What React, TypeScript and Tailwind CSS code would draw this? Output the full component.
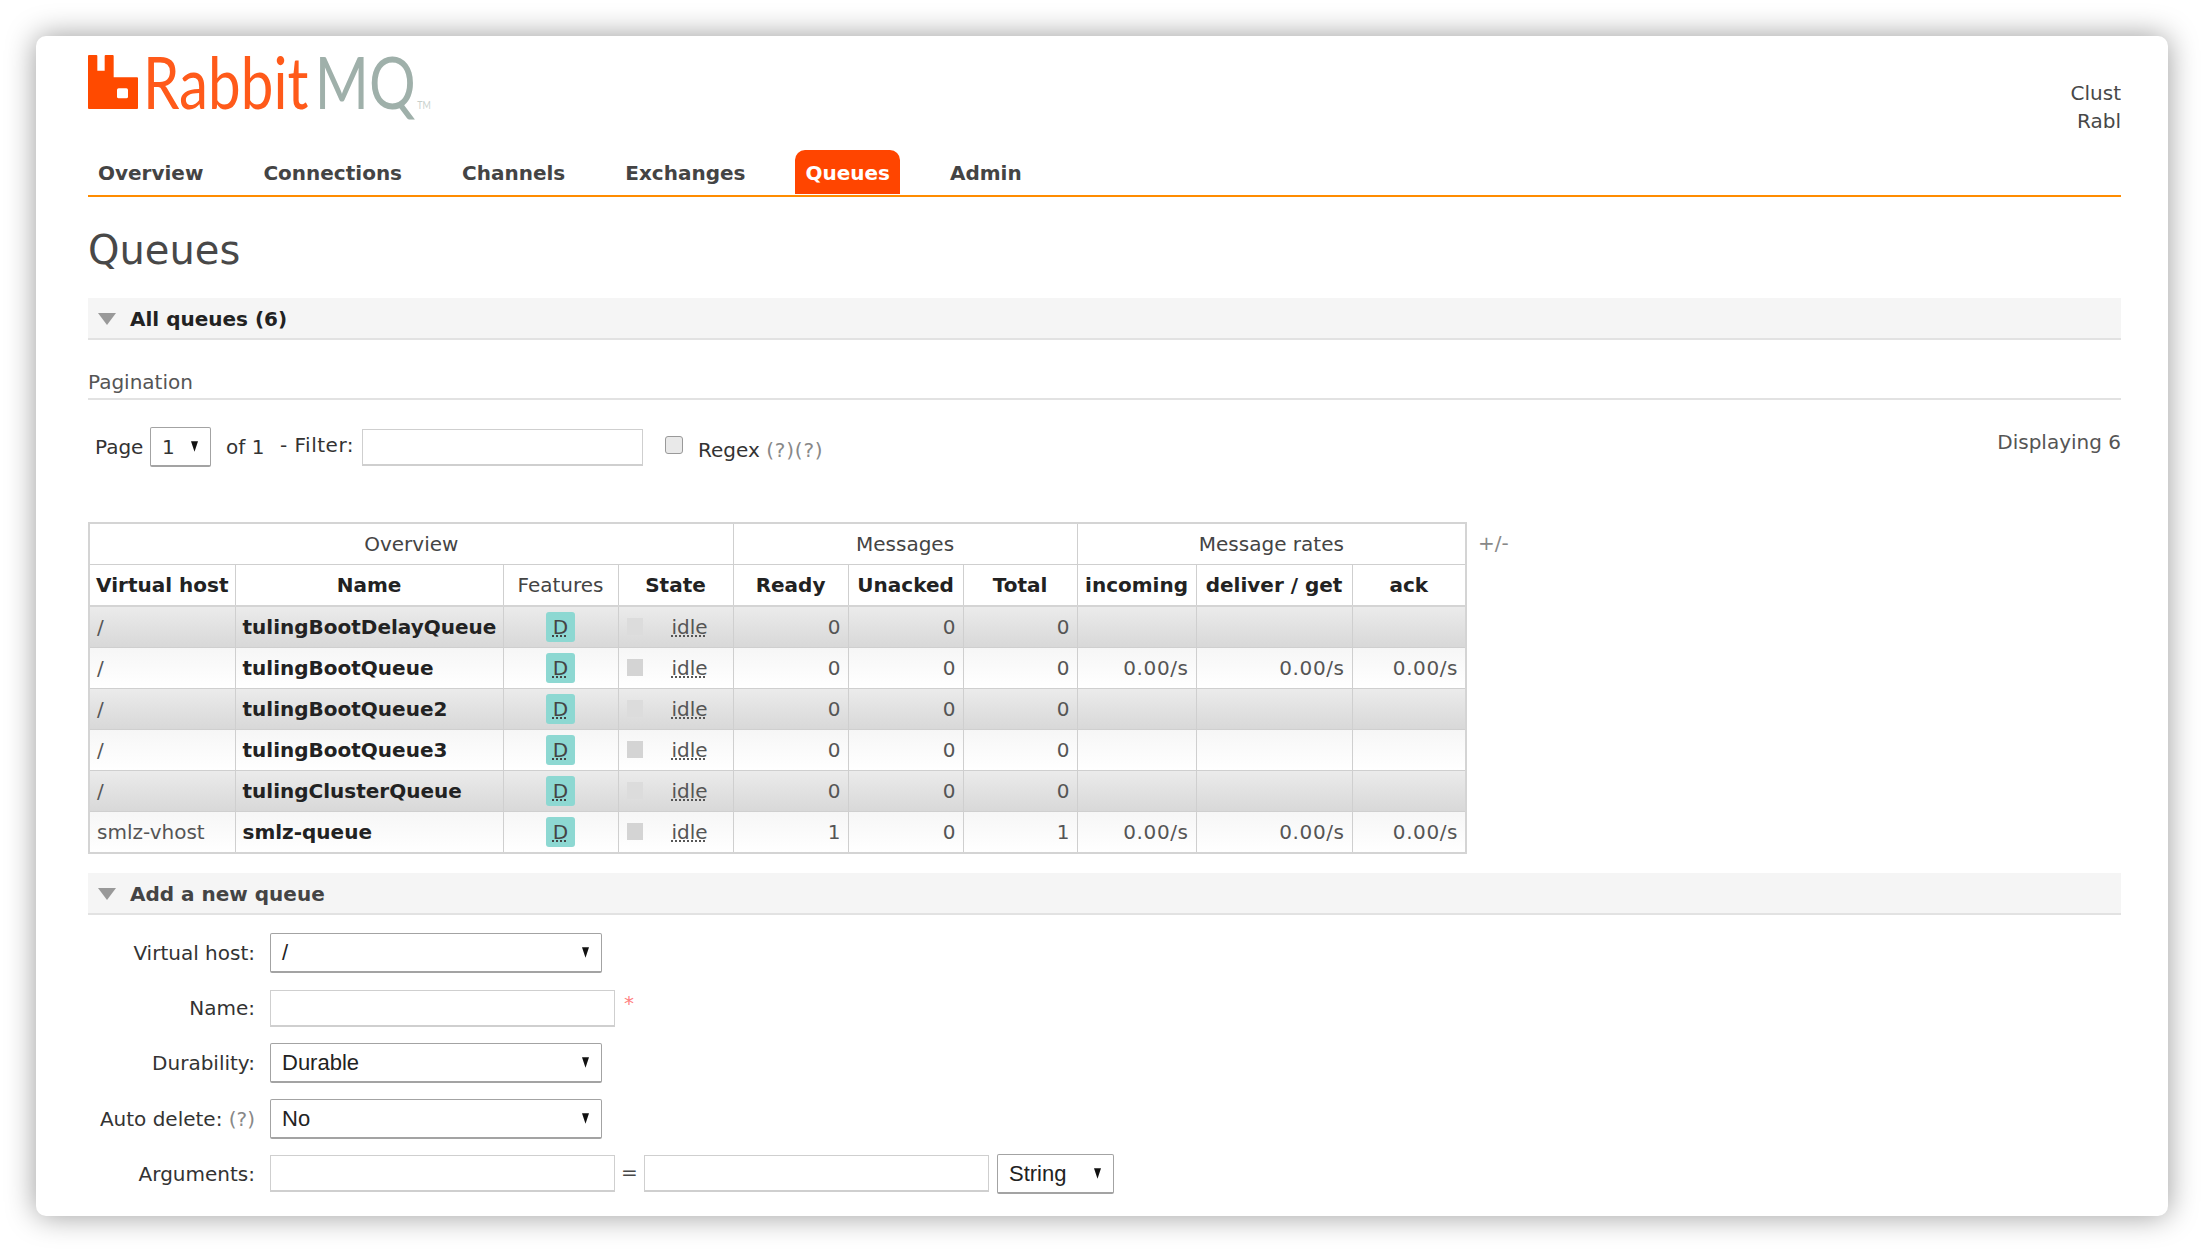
// App.tsx
const navItems = ['Overview', 'Connections', 'Channels', 'Exchanges', 'Queues', 'Admin']

const queues = [
  { vhost: '/', name: 'tulingBootDelayQueue', ready: 0, unacked: 0, total: 0, rates: false },
  { vhost: '/', name: 'tulingBootQueue', ready: 0, unacked: 0, total: 0, rates: true },
  { vhost: '/', name: 'tulingBootQueue2', ready: 0, unacked: 0, total: 0, rates: false },
  { vhost: '/', name: 'tulingBootQueue3', ready: 0, unacked: 0, total: 0, rates: false },
  { vhost: '/', name: 'tulingClusterQueue', ready: 0, unacked: 0, total: 0, rates: false },
  { vhost: 'smlz-vhost', name: 'smlz-queue', ready: 1, unacked: 0, total: 1, rates: true },
]

function Logo() {
  return (
    <div className="flex items-start h-[60px] w-[345px]">
      <svg viewBox="0 0 150 162" className="w-[50px] h-[54px] shrink-0" aria-hidden="true">
        <path
          fillRule="evenodd"
          fill="#ff4a00"
          d="M0 3 Q0 0 3 0 H25 Q28 0 28 3 V47 H50 V3 Q50 0 53 0 H74 Q77 0 77 3 V67 H147 Q150 67 150 70 V159 Q150 162 147 162 H3 Q0 162 0 159 Z M92 100 Q87 100 87 105 V125 Q87 130 92 130 H115 Q120 130 120 125 V105 Q120 100 115 100 Z"
        />
      </svg>
      <div className="ml-[5px] -mt-[14px] origin-left scale-x-[0.81] whitespace-nowrap font-['Lato',sans-serif] font-normal text-[72px] leading-[80px] text-[#ff5a1a]">
        Rabbit<span className="ml-[8px] text-[#9fb0aa]">MQ</span>
        <span className="ml-[2px] text-[11px] leading-none text-[#c8d0cc]">TM</span>
      </div>
    </div>
  )
}

function SectionHeader({ title, color }: { title: string; color: string }) {
  return (
    <div className="flex items-center h-[42px] bg-[#f5f5f5] border-b-2 border-[#e2e2e2] pl-[10px] pt-[2px]">
      <svg viewBox="0 0 18 12" className="w-[18px] h-[12px]" aria-hidden="true">
        <path d="M0 0 H18 L9 12 Z" fill="#999999" />
      </svg>
      <span className={`ml-[14px] font-bold text-[20px] ${color}`}>{title}</span>
    </div>
  )
}

function SelectBox({ value, className }: { value: string; className: string }) {
  return (
    <div
      className={`flex items-center justify-between h-[40px] rounded-[2px] bg-white border-[1.5px] border-b-2 border-[#a3a3a3] pl-[11px] pr-[12px] font-['Liberation_Sans',sans-serif] text-[22px] text-[#222] ${className}`}
    >
      <span>{value}</span>
      <svg viewBox="0 0 8 12" className="w-[7px] h-[11px]" aria-hidden="true">
        <path d="M0 0 H8 L4 12 Z" fill="#111111" />
      </svg>
    </div>
  )
}

function TextInput({ className }: { className: string }) {
  return (
    <input
      type="text"
      aria-label="text"
      className={`block h-[37px] bg-white border-[1.5px] border-b-2 border-[#cfcfcf] ${className}`}
    />
  )
}

function FormRow({ label, hint, children }: { label: string; hint?: boolean; children: React.ReactNode }) {
  return (
    <div className="flex items-center h-[40px]">
      <div className="w-[167px] text-right whitespace-nowrap text-[#333]">
        {label}
        {hint && <span className="text-[#888]"> (?)</span>}
      </div>
      <div className="ml-[15px] flex items-center">{children}</div>
    </div>
  )
}

const thClass = 'border border-[#cfcfcf] font-bold text-[#222] text-center'
const groupClass = 'border border-[#cfcfcf] font-normal text-[#444] text-center'
const numClass = 'border border-[#cfcfcf] text-right pr-[7px] text-[#555]'
const rateClass = 'border border-[#cfcfcf] text-right pr-[7px] text-[#555] tracking-[0.6px]'

export default function App() {
  return (
    <div className="h-[1252px] w-[2204px] overflow-hidden bg-white p-[36px] [font-family:'DejaVu_Sans',sans-serif] text-[20px] text-[#484848]">
      <div className="h-[1180px] rounded-[10px] bg-white pl-[52px] pr-[47px] shadow-[0_0_30px_rgba(0,0,0,0.4)]">
        <header className="flex items-start justify-between h-[114px] pt-[19px]">
          <Logo />
          <div className="mt-[24px] w-[120px] overflow-hidden text-right leading-[28px]">
            <div>Clust</div>
            <div>Rabl</div>
          </div>
        </header>

        <nav className="flex items-start gap-[40px] h-[47px] border-b-2 border-[#ff8c00]">
          {navItems.map((item) => (
            <a
              key={item}
              className={
                item === 'Queues'
                  ? 'flex items-center h-[44px] px-[10px] pt-[2px] rounded-t-[10px] bg-[#ff4500] text-white font-bold'
                  : 'flex items-center h-[44px] px-[10px] pt-[2px] text-[#444] font-bold'
              }
            >
              {item}
            </a>
          ))}
        </nav>

        <h1 className="flex items-center h-[101px] pt-[5px] text-[40px] text-[#484848]">Queues</h1>

        <SectionHeader title="All queues (6)" color="text-[#222]" />

        <div className="flex items-end h-[60px] border-b-2 border-[#e2e2e2] pb-[1px] text-[#555]">Pagination</div>

        <div className="flex items-start h-[122px] pt-[27px]">
          <span className="ml-[7px] mt-[5px] w-[55px] text-[#333]">Page</span>
          <div className="flex items-center justify-between w-[61px] h-[40px] rounded-[2px] border-[1.5px] border-b-2 border-[#a3a3a3] pl-[11px] pr-[12px] text-[#333]">
            <span>1</span>
            <svg viewBox="0 0 8 12" className="w-[7px] h-[11px]" aria-hidden="true">
              <path d="M0 0 H8 L4 12 Z" fill="#111111" />
            </svg>
          </div>
          <span className="ml-[15px] mt-[5px] w-[54px] text-[#333]">of 1</span>
          <span className="mt-[3px] w-[82px] text-[#333] tracking-[0.5px]">- Filter:</span>
          <TextInput className="mt-[2px] w-[281px]" />
          <div className="ml-[22px] mt-[9px] w-[18px] h-[18px] rounded-[3px] border border-[#999] bg-[#e9e9e9]" />
          <span className="ml-[15px] mt-[8px] text-[#333]">
            Regex <span className="text-[#888] tracking-[0.8px]">(?)(?)</span>
          </span>
          <span className="ml-auto mt-[0px] text-[#555]">Displaying 6</span>
        </div>

        <div className="flex items-start">
          <table className="table-fixed border-collapse w-[1377px] border-2 border-[#d4d4d4]">
            <colgroup>
              <col className="w-[146px]" />
              <col className="w-[268px]" />
              <col className="w-[115px]" />
              <col className="w-[115px]" />
              <col className="w-[115px]" />
              <col className="w-[115px]" />
              <col className="w-[114px]" />
              <col className="w-[119px]" />
              <col className="w-[156px]" />
              <col className="w-[114px]" />
            </colgroup>
            <thead>
              <tr className="h-[41px]">
                <th colSpan={4} className={groupClass}>Overview</th>
                <th colSpan={3} className={groupClass}>Messages</th>
                <th colSpan={3} className={groupClass}>Message rates</th>
              </tr>
              <tr className="h-[42px] border-b-2 border-[#d4d4d4]">
                <th className={`${thClass} whitespace-nowrap`}>Virtual host</th>
                <th className={thClass}>Name</th>
                <th className="border border-[#cfcfcf] font-normal text-[#444] text-center">Features</th>
                <th className={thClass}>State</th>
                <th className={thClass}>Ready</th>
                <th className={thClass}>Unacked</th>
                <th className={thClass}>Total</th>
                <th className={thClass}>incoming</th>
                <th className={thClass}>deliver / get</th>
                <th className={thClass}>ack</th>
              </tr>
            </thead>
            <tbody>
              {queues.map((q, i) => (
                <tr
                  key={q.name}
                  className={`h-[41.1px] ${
                    i % 2 === 0
                      ? 'bg-linear-to-b from-[#ececec] to-[#d8d8d8]'
                      : 'bg-linear-to-b from-[#f6f6f6] to-[#ffffff]'
                  }`}
                >
                  <td className="border border-[#cfcfcf] pl-[7px] text-[#555]">{q.vhost}</td>
                  <td className="border border-[#cfcfcf] pl-[7px] font-bold text-[#222] whitespace-nowrap">{q.name}</td>
                  <td className="border border-[#cfcfcf]">
                    <div className="mx-auto flex items-center justify-center w-[29px] h-[30px] rounded-[3px] bg-[#8dd8d2]">
                      <span className="underline decoration-dotted underline-offset-2 text-[#444]">D</span>
                    </div>
                  </td>
                  <td className="border border-[#cfcfcf] pl-[8px]">
                    <div className="flex items-center">
                      <span className={`w-[16px] h-[17px] ${i % 2 === 0 ? 'bg-[#dcdcdc]' : 'bg-[#d4d4d4]'}`} />
                      <span className="ml-[29px] underline decoration-dotted underline-offset-2 text-[#555]">idle</span>
                    </div>
                  </td>
                  <td className={numClass}>{q.ready}</td>
                  <td className={numClass}>{q.unacked}</td>
                  <td className={numClass}>{q.total}</td>
                  <td className={rateClass}>{q.rates ? '0.00/s' : ''}</td>
                  <td className={rateClass}>{q.rates ? '0.00/s' : ''}</td>
                  <td className={rateClass}>{q.rates ? '0.00/s' : ''}</td>
                </tr>
              ))}
            </tbody>
          </table>
          <span className="ml-[11px] mt-[6px] text-[#888]">+/-</span>
        </div>

        <div className="mt-[19px]">
          <SectionHeader title="Add a new queue" color="text-[#444]" />
        </div>

        <div className="mt-[18.5px] flex flex-col gap-[15.2px]">
          <FormRow label="Virtual host:">
            <SelectBox value="/" className="w-[332px]" />
          </FormRow>
          <FormRow label="Name:">
            <TextInput className="w-[345px]" />
            <span className="ml-[9px] -mt-[10px] text-[#ff8080]">*</span>
          </FormRow>
          <FormRow label="Durability:">
            <SelectBox value="Durable" className="w-[332px]" />
          </FormRow>
          <FormRow label="Auto delete:" hint>
            <SelectBox value="No" className="w-[332px]" />
          </FormRow>
          <FormRow label="Arguments:">
            <TextInput className="w-[345px]" />
            <span className="w-[29px] -mt-[4px] text-center">=</span>
            <TextInput className="w-[345px]" />
            <SelectBox value="String" className="ml-[8px] w-[117px]" />
          </FormRow>
        </div>
      </div>
    </div>
  )
}
